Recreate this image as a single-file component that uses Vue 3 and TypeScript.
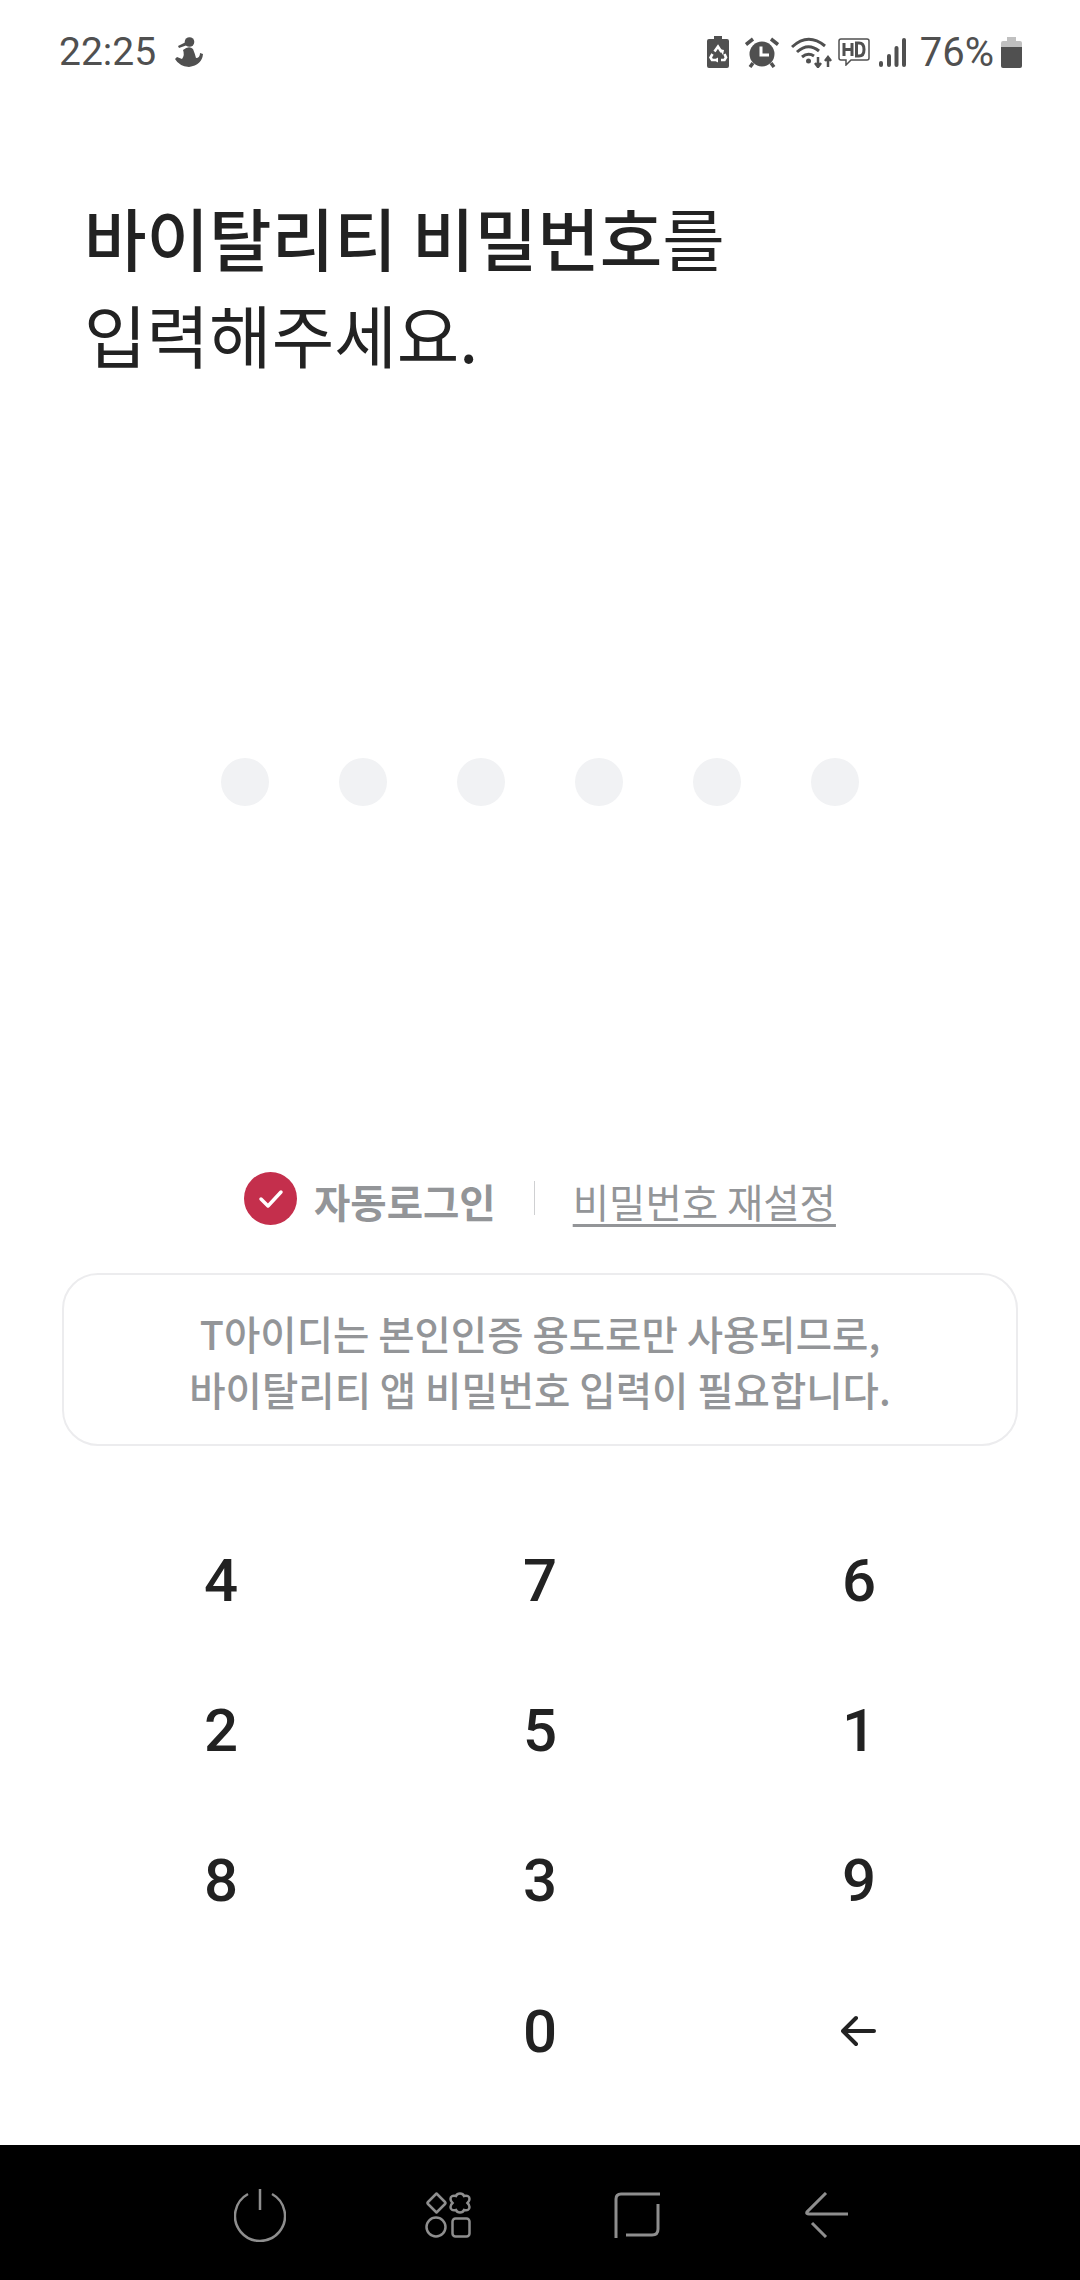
<script setup lang="ts">
const dots = [1, 2, 3, 4, 5, 6]
const keys = ['4', '7', '6', '2', '5', '1', '8', '3', '9', '', '0']
</script>

<template>
  <div class="screen">
    <div class="status">
      <div class="status-left">
        <span class="clock">22:25</span>
        <svg class="ic-sam" width="28" height="30" viewBox="0 0 28 30">
          <circle cx="14.500" cy="5" r="4.800" fill="#505050" />
          <path d="M11 5 L3 9 L4 11 L11 8.500Z" fill="#505050" />
          <path d="M8 13 Q14 8 18 12 Q20 17 21 21 Q25 21 25 16 L28 17 Q27 28 14 30 Q4 29 0 22 L2 20 L7 22 Q10 18 8 13Z" fill="#505050" />
        </svg>
      </div>
      <div class="status-right">
        <svg class="i-bat" width="22" height="32" viewBox="0 0 22 32">
          <path d="M7 0h8v3h5q2 0 2 2v25q0 2-2 2H2q-2 0-2-2V5q0-2 2-2h5z" fill="#505050" />
          <g fill="none" stroke="#fff" stroke-width="2.600">
            <path d="M7.500 15.500L11 10.500l3.500 5.500" />
            <path d="M5.500 18L3.500 21.500 5 24h5" />
            <path d="M17.500 18l1.500 3.500L17.500 24H14" />
          </g>
          <path d="M12 13l5 1-1 5zM11 21.500v5l-4-2.500z" fill="#fff" />
        </svg>
        <svg class="i-alarm" width="34" height="31" viewBox="0 0 34 31">
          <circle cx="17" cy="17" r="12.500" fill="#505050" />
          <path d="M16 9.500v8.500h8" fill="none" stroke="#fff" stroke-width="3" />
          <path d="M1 7.500l7-5.500M33 7.500l-7-5.500M8 26l-3 4M26 26l3 4" stroke="#505050" stroke-width="3.500" fill="none" />
        </svg>
        <svg class="i-wifi" width="41" height="32" viewBox="0 0 41 32">
          <path d="M1 11Q17-4 34 10M6 16Q17 6 28 15M11 21Q17 16 23 20" fill="none" stroke="#505050" stroke-width="3" />
          <circle cx="17.500" cy="25" r="2.500" fill="#505050" />
          <path d="M27 21v10M24 27l3 4 3-4M37 31v-10M34 25l3-4 3 4" fill="none" stroke="#505050" stroke-width="2.500" />
        </svg>
        <svg class="i-hd" width="32" height="28" viewBox="0 0 32 28">
          <path d="M3 1h26q2 0 2 2v17q0 2-2 2H13l-5 5v-5H3q-2 0-2-2V3q0-2 2-2z" fill="none" stroke="#505050" stroke-width="1.500" />
          <path d="M6 5v13M14 5v13M6 11.500h8M18.500 5v13h2.500q5 0 5-6.500T21 5z" fill="none" stroke="#505050" stroke-width="3" />
        </svg>
        <svg class="i-sig" width="27" height="29" viewBox="0 0 27 29">
          <g fill="#505050">
            <rect x="0" y="23" width="4" height="6" rx="2" />
            <rect x="8" y="16" width="4" height="13" rx="2" />
            <rect x="15.500" y="8" width="4" height="21" rx="2" />
            <rect x="23" y="0" width="4" height="29" rx="2" />
          </g>
        </svg>
        <span class="pct">76%</span>
        <svg class="i-batt" width="21" height="31" viewBox="0 0 21 31">
          <path d="M6 0h9v4h4q2 0 2 2v4H0V6q0-2 2-2h4z" fill="#c0c0c0" />
          <path d="M0 10h21v19q0 2-2 2H2q-2 0-2-2z" fill="#505050" />
        </svg>
      </div>
    </div>

    <h1 class="title"><b>바이탈리티 비밀번호</b>를<br />입력해주세요.</h1>

    <div class="dots">
      <span v-for="d in dots" :key="d" class="dot"></span>
    </div>

    <div class="options">
      <svg class="check" width="53" height="53" viewBox="0 0 53 53">
        <circle cx="26.500" cy="26.500" r="26.500" fill="#c42f4c" />
        <path d="M17 27l7 7 13-14" fill="none" stroke="#fff" stroke-width="3.500" stroke-linecap="round" stroke-linejoin="round" />
      </svg>
      <span class="auto">자동로그인</span>
      <span class="sep"></span>
      <a class="reset">비밀번호 재설정</a>
    </div>

    <div class="notice">T아이디는 본인인증 용도로만 사용되므로,<br />바이탈리티 앱 비밀번호 입력이 필요합니다.</div>

    <div class="keypad">
      <div v-for="(k, i) in keys" :key="i" class="key">{{ k }}</div>
      <div class="key">
        <svg width="36" height="32" viewBox="0 0 36 32">
          <path d="M33 16H3M15 3L2 16l13 13" fill="none" stroke="#222" stroke-width="4" stroke-linecap="round" stroke-linejoin="round" />
        </svg>
      </div>
    </div>

    <div class="navbar">
      <svg width="52" height="53" viewBox="0 0 52 53">
        <path d="M14 5A25 25 0 1 0 38 5M26 0v21" fill="none" stroke="#8e8e8e" stroke-width="2.500" />
      </svg>
      <svg class="nav-apps" width="46" height="46" viewBox="0 0 46 46">
        <g fill="none" stroke="#8e8e8e" stroke-width="2.500">
          <path d="M11.500 1.500l8.500 8.500q1 1 0 2l-8.500 8.500-8.500-8.500q-1-1 0-2z" stroke-linejoin="round" />
          <path d="M35 1.500q3 0 4 2.500 5.500-1 5.500 3 0 2-2 4 2 2 2 4 0 4-5.500 3-1 2.500-4 2.500t-4-2.500q-5.500 1-5.500-3 0-2 2-4-2-2-2-4 0-4 5.500-3 1-2.500 4-2.500z" />
          <ellipse cx="11" cy="35" rx="9.500" ry="9.500" />
          <rect x="27.500" y="26.500" width="17" height="18" rx="3" />
        </g>
      </svg>
      <svg class="nav-recent" width="46" height="46" viewBox="0 0 46 46">
        <path d="M46 2H7Q2 2 2 7V46M44 12V37Q44 43 38 43H12" fill="none" stroke="#8e8e8e" stroke-width="3" />
      </svg>
      <svg class="nav-back" width="43" height="46" viewBox="0 0 43 46">
        <path d="M21 1L2 20q-1 2 2 2h39M7 31l14 14" fill="none" stroke="#8e8e8e" stroke-width="3" />
      </svg>
    </div>
  </div>
</template>

<style>
body {
  background: #fff;
}
</style>

<style scoped>
.screen {
  width: 1080px;
  height: 2280px;
  display: flex;
  flex-direction: column;
  background: #fff;
  font-family: "Noto Sans CJK KR", "Roboto", sans-serif;
  overflow: hidden;
}

.status {
  height: 104px;
  padding: 0 58px 0 59px;
  display: flex;
  align-items: center;
  justify-content: space-between;
  color: #505050;
  font-family: Roboto, sans-serif;
}

.status-left,
.status-right {
  display: flex;
  align-items: center;
}

.clock {
  font-size: 39px;
  margin-right: 19px;
}

.i-alarm {
  margin-left: 16px;
}

.i-wifi {
  margin-left: 12px;
}

.i-hd {
  margin-left: 6px;
}

.i-sig {
  margin-left: 9px;
}

.pct {
  font-size: 40px;
  margin-left: 14px;
}

.i-batt {
  margin-left: 7px;
}

.title {
  margin: 84px 0 0 84px;
  font-size: 68px;
  line-height: 97px;
  font-weight: 400;
  color: #222;
}

.title b {
  font-weight: 500;
}

.dots {
  margin-top: 376px;
  padding-left: 221px;
  display: flex;
  gap: 70px;
}

.dot {
  width: 48px;
  height: 48px;
  border-radius: 50%;
  background: #f1f2f4;
}

.options {
  margin-top: 365px;
  height: 54px;
  padding-left: 244px;
  display: flex;
  align-items: center;
}

.auto {
  margin: 5px 0 0 17px;
  font-size: 39.500px;
  font-weight: 700;
  color: #939598;
}

.sep {
  width: 1px;
  height: 34px;
  margin: 0 38px 0 38px;
  background: #cfd0d2;
}

.reset {
  margin-top: 5px;
  font-size: 39.500px;
  color: #939598;
  text-decoration: underline;
  text-underline-offset: 6px;
}

.notice {
  margin: 48px 62px 0;
  height: 173px;
  box-sizing: border-box;
  border: 2px solid #ececee;
  border-radius: 36px;
  padding-top: 30px;
  font-size: 39.500px;
  font-weight: 500;
  line-height: 56px;
  text-align: center;
  color: #939598;
}

.keypad {
  margin-top: 59px;
  padding: 0 62px;
  display: grid;
  grid-template-columns: repeat(3, 319px);
  grid-auto-rows: 150.330px;
  justify-content: center;
}

.key {
  display: flex;
  align-items: center;
  justify-content: center;
  font-family: Roboto, sans-serif;
  font-size: 60px;
  font-weight: 500;
  color: #222;
}

.navbar {
  margin-top: auto;
  height: 135px;
  box-sizing: border-box;
  background: #000;
  padding: 5px 0 0 234px;
  display: flex;
  align-items: center;
}

.nav-apps {
  margin-left: 139px;
}

.nav-recent {
  margin-left: 143px;
}

.nav-back {
  margin-left: 145px;
}
</style>
